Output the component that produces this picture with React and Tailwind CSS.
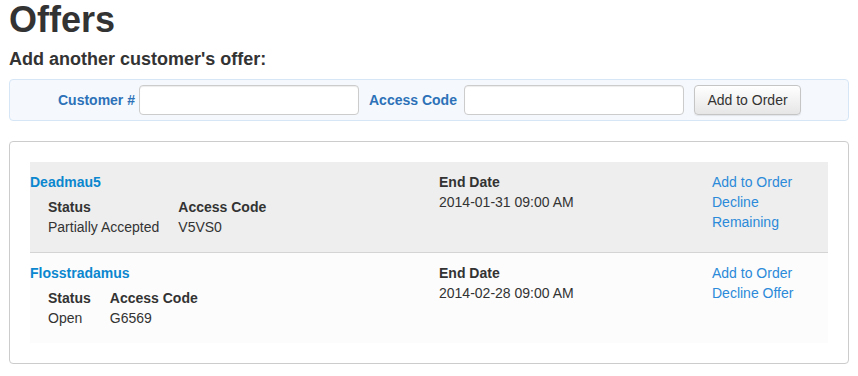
const offers = [
  {
    name: "Deadmau5",
    status: "Partially Accepted",
    code: "V5VS0",
    endDate: "2014-01-31 09:00 AM",
    actions: ["Add to Order", "Decline", "Remaining"],
    bg: "bg-[#eeeeee] border-b border-[#d4d4d4]",
  },
  {
    name: "Flosstradamus",
    status: "Open",
    code: "G6569",
    endDate: "2014-02-28 09:00 AM",
    actions: ["Add to Order", "Decline Offer"],
    bg: "bg-[#fcfcfc]",
  },
];

function OfferRow({ offer }) {
  return (
    <div className={`grid grid-cols-[409px_273px_1fr] pt-[10px] pb-[15px] leading-[20px] ${offer.bg}`}>
      <div>
        <a href="#" className="block font-bold text-[#0b87cf]">{offer.name}</a>
        <div className="mt-[5px] ml-[18px] inline-grid grid-cols-[auto_auto] gap-x-[19px]">
          <div className="font-bold">Status</div>
          <div className="font-bold">Access Code</div>
          <div>{offer.status}</div>
          <div>{offer.code}</div>
        </div>
      </div>
      <div>
        <div className="font-bold">End Date</div>
        <div>{offer.endDate}</div>
      </div>
      <div className="flex flex-col items-start">
        {offer.actions.map((a) => (
          <a key={a} href="#" className="text-[#2b8ad9]">{a}</a>
        ))}
      </div>
    </div>
  );
}

export default function App() {
  return (
    <div className="min-h-screen bg-white px-[9px] font-['Liberation_Sans',Arial,sans-serif] text-[14px] text-[#333333]">
      <h1 className="text-[36px] font-bold leading-[40px]">Offers</h1>
      <h2 className="mt-[9px] text-[18px] font-bold leading-[20px]">Add another customer's offer:</h2>

      {/* add offer form */}
      <div className="mt-[10px] flex items-center rounded-[4px] border border-[#d6e6f6] bg-[#f5f9fd] py-[5px]">
        <label className="w-[125px] text-right font-bold text-[#2d71b8]">Customer #</label>
        <input className="ml-[4px] h-[30px] w-[220px] rounded-[4px] border border-[#cccccc] bg-white px-2 shadow-[inset_0_1px_1px_rgba(0,0,0,0.075)] outline-none" />
        <label className="ml-[10px] w-[91px] font-bold text-[#2d71b8]">Access Code</label>
        <input className="ml-[4px] h-[30px] w-[220px] rounded-[4px] border border-[#cccccc] bg-white px-2 shadow-[inset_0_1px_1px_rgba(0,0,0,0.075)] outline-none" />
        <button className="ml-[10px] h-[30px] w-[107px] rounded-[4px] border border-[#c5c5c5] bg-gradient-to-b from-white to-[#e6e6e6] text-[#333333] shadow-[0_1px_1px_rgba(0,0,0,0.08)]">
          Add to Order
        </button>
      </div>

      {/* offers list */}
      <div className="mt-[20px] rounded-[4px] border border-[#cccccc] p-[20px]">
        {offers.map((o) => (
          <OfferRow key={o.name} offer={o} />
        ))}
      </div>
    </div>
  );
}
